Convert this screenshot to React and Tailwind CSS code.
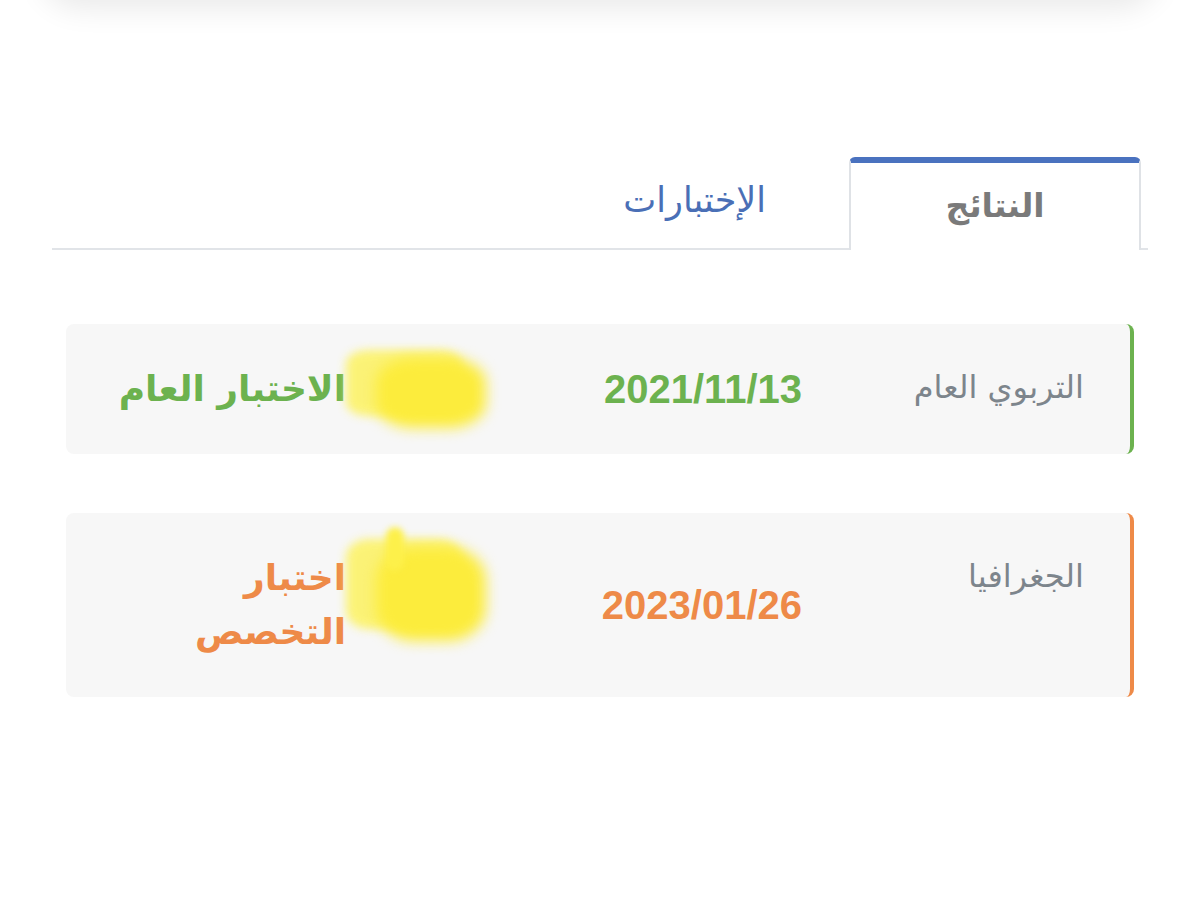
import React from 'react'

const AR = { fontFamily: '"DejaVu Sans", "Noto Sans", sans-serif' }
const NUM = { fontFamily: '"Liberation Sans", Arial, sans-serif' }

const RESULTS = [
  {
    subject: 'التربوي العام',
    date: '2021/11/13',
    exam: ['الاختبار العام'],
    color: 'text-[#6cb24f]',
    border: 'border-r-[#6cb24f]',
  },
  {
    subject: 'الجغرافيا',
    date: '2023/01/26',
    exam: ['اختبار', 'التخصص'],
    color: 'text-[#ee8a48]',
    border: 'border-r-[#ee8a48]',
  },
]

function Blob({ tall }) {
  // yellow marker scribble over the hidden word
  return (
    <div className={`pointer-events-none absolute left-[274px] top-[22px] ${tall ? 'h-[108px]' : 'h-[84px]'} w-[152px]`}>
      <div className="absolute left-[6px] right-[30px] top-[4px] bottom-[14px] rounded-[20%] bg-[#fdf256] opacity-80 blur-[5px]" />
      <div className="absolute left-[36px] right-[6px] top-[12px] bottom-[2px] rounded-[35%] bg-[#fcec3c] blur-[7px]" />
      {tall && <div className="absolute left-[46px] top-[-8px] h-[44px] w-[18px] rounded-full bg-[#fdf04a] blur-[3px]" />}
    </div>
  )
}

export default function App() {
  return (
    <div className="min-h-[909px] bg-white" dir="rtl" style={AR}>
      {/* header shadow */}
      <div className="mx-[40px] -mt-[40px] h-[40px] rounded-b-[40px] bg-white shadow-[0_8px_30px_rgba(0,0,0,0.09)]" />

      {/* Tabs */}
      <div className="mx-[52px] mt-[157px] flex items-end border-b-2 border-[#e1e4e8]">
        <div className="mr-[7px] -mb-[2px] flex h-[93px] w-[292px] items-center justify-center rounded-t-[6px] border-x-2 border-t-[6px] border-x-[#dfe2e6] border-t-[#4a72bf] bg-white pb-[2px]">
          <span className="text-[33px] font-bold text-[#7a7a7a]">النتائج</span>
        </div>
        <div className="flex h-[91px] items-center pr-[83px] pb-[4px]">
          <span className="text-[35px] text-[#4a6fb6]">الإختبارات</span>
        </div>
      </div>

      {/* Result cards */}
      <div className="mx-[66px] mt-[74px] flex flex-col gap-[59px]">
        {RESULTS.map((r, i) => (
          <div
            key={r.date}
            className={`relative flex items-center rounded-[8px] border-r-4 ${r.border} bg-[#f7f7f7] py-[38px] pl-[40px] pr-[46px]`}
          >
            <div className="w-[220px] self-start text-[32px] leading-[50px] text-[#7d858c]">{r.subject}</div>
            <div className="mr-[62px] w-[230px] text-right">
              <span className={`text-[40px] font-bold leading-[54px] ${r.color}`} style={NUM}>{r.date}</span>
            </div>
            <div className={`mr-[76px] w-[390px] pr-[150px] text-[36px] font-bold leading-[54px] ${r.color}`}>
              {r.exam.map((line) => (
                <div key={line}>{line}</div>
              ))}
            </div>
            <Blob tall={i === 1} />
          </div>
        ))}
      </div>
    </div>
  )
}
